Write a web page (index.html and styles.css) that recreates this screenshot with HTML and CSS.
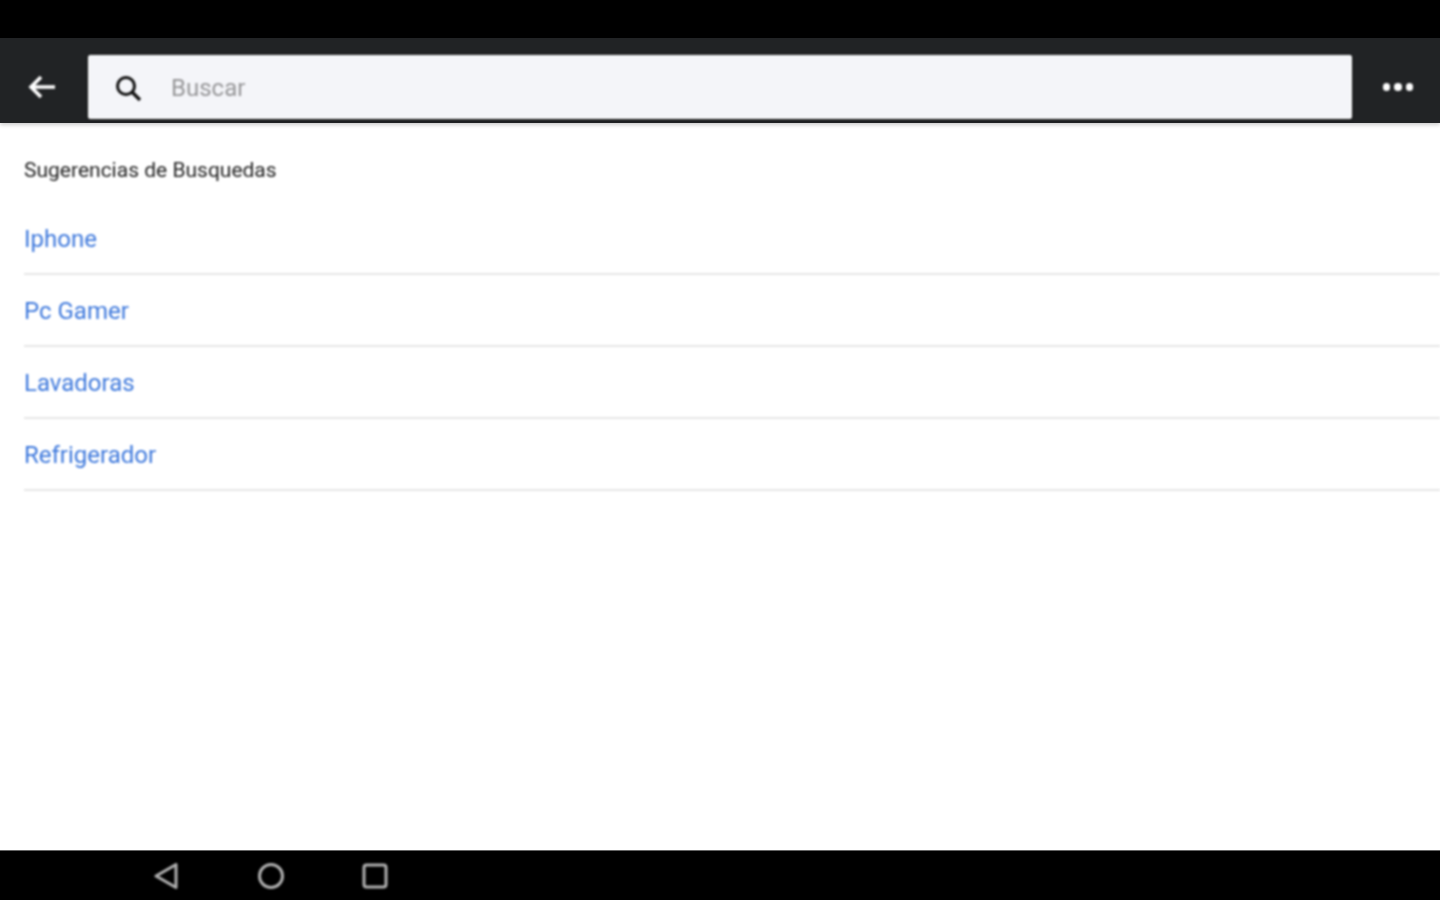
FILE: index.html
```html
<!DOCTYPE html>
<html lang="es">
<head>
    <meta charset="UTF-8">
    <meta name="viewport" content="width=device-width, initial-scale=1.0">
    <title>Buscar</title>
    <link rel="stylesheet" href="styles.css">
</head>
<body>
    <div class="screen">
        <div class="status-bar"></div>
        <header class="toolbar">
            <button class="back-btn soft" type="button" aria-label="Volver">
                <svg width="30" height="26" viewBox="0 0 30 26"><path d="M28 13H4M14 3L4 13l10 10" fill="none" stroke="#fff" stroke-width="3.6"/></svg>
            </button>
            <div class="search-box soft">
                <svg class="search-icon" width="28" height="28" viewBox="0 0 28 28"><circle cx="12" cy="12" r="8.500" fill="none" stroke="#111" stroke-width="3"/><path d="M18 18l8 8" stroke="#111" stroke-width="3.400" fill="none"/></svg>
                <span class="placeholder">Buscar</span>
            </div>
            <button class="more-btn soft" type="button" aria-label="Más opciones">
                <span class="dot"></span><span class="dot"></span><span class="dot"></span>
            </button>
        </header>
        <main class="content">
            <h2 class="section-title soft">Sugerencias de Busquedas</h2>
            <ul class="suggestions soft">
                <li>Iphone</li>
                <li>Pc Gamer</li>
                <li>Lavadoras</li>
                <li>Refrigerador</li>
            </ul>
        </main>
        <nav class="nav-bar">
            <div class="nav-item soft"><svg width="28" height="32" viewBox="0 0 28 32"><path d="M24 4.500V27.500L4 16Z" fill="none" stroke="#b0b0b0" stroke-width="3" stroke-linejoin="round"/></svg></div>
            <div class="nav-item soft"><svg width="28" height="28" viewBox="0 0 28 28"><circle cx="14" cy="14" r="11.500" fill="none" stroke="#b0b0b0" stroke-width="3"/></svg></div>
            <div class="nav-item soft"><svg width="26" height="26" viewBox="0 0 26 26"><rect x="2" y="2" width="22" height="22" rx="2.500" fill="none" stroke="#b0b0b0" stroke-width="3"/></svg></div>
        </nav>
    </div>
</body>
</html>
```

FILE: styles.css
```css
body {
    margin: 0;
    padding: 0;
    font-family: Roboto, "Liberation Sans", sans-serif;
    background-color: #fff;
}

.screen {
    display: flex;
    flex-direction: column;
    height: 900px;
    overflow: hidden;
}

/* the source capture is a soft upscaled image */
.soft {
    filter: blur(0.8px);
}

.status-bar {
    height: 38px;
    background-color: #000;
}

.toolbar {
    display: flex;
    align-items: center;
    height: 85px;
    padding: 17px 0 4px;
    box-sizing: border-box;
    background-color: #212325;
    box-shadow: 0 2px 4px rgba(0, 0, 0, 0.2);
}

.back-btn {
    display: flex;
    align-items: center;
    justify-content: center;
    width: 88px;
    padding: 0 4px 0 0;
    background: none;
    border: none;
}

.search-box {
    display: flex;
    align-items: center;
    flex: 1;
    height: 64px;
    padding: 1px 0 0 25px;
    background-color: #f4f5f9;
    border: 1px solid #fff;
    border-radius: 2px;
    box-sizing: border-box;
    box-shadow: 0 1px 2px rgba(0, 0, 0, 0.7);
}

.search-icon {
    margin-right: 29px;
}

.placeholder {
    color: #969698;
    font-size: 24px;
}

.more-btn {
    display: flex;
    align-items: center;
    justify-content: center;
    gap: 4px;
    width: 88px;
    padding: 0 0 0 4px;
    background: none;
    border: none;
}

.dot {
    width: 7.500px;
    height: 7.500px;
    background-color: #fff;
    border-radius: 50%;
}

.content {
    flex: 1;
    padding: 33px 0 0 24px;
}

.section-title {
    margin: 0 0 19px;
    color: #1f1f1f;
    font-size: 21px;
    font-weight: 400;
    line-height: 28px;
}

.suggestions {
    list-style-type: none;
    margin: 0;
    padding: 0;
}

.suggestions li {
    height: 68px;
    padding-top: 2px;
    line-height: 69px;
    color: #3d78dc;
    font-size: 24px;
    border-bottom: 2px solid #e6e6e6;
}

.nav-bar {
    display: flex;
    align-items: center;
    height: 49px;
    padding-left: 114px;
    background-color: #000;
    border-top: 1px solid #666;
}

.nav-item {
    display: flex;
    justify-content: center;
    width: 104.500px;
}
```
